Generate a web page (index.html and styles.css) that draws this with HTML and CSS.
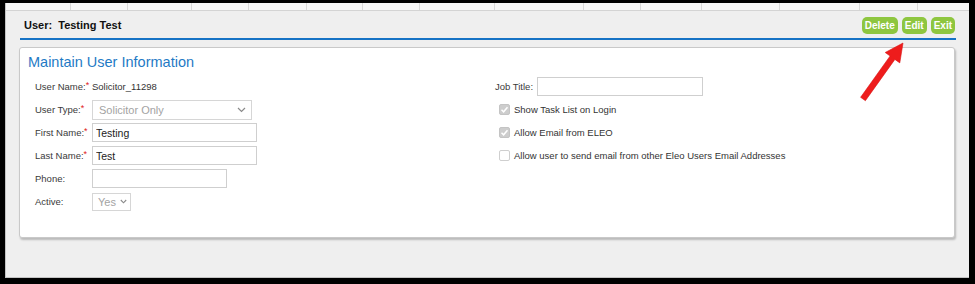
FILE: index.html
```html
<!DOCTYPE html>
<html lang="en">

<head>
   <meta charset="UTF-8">
   <meta name="viewport" content="width=device-width, initial-scale=1.0">
   <title>Maintain User Information</title>

   <link rel="stylesheet" href="styles.css">
</head>

<body>
   <div class="frame">
      <!-- bottom edge of the grid behind the popup -->
      <div class="grid-strip">
         <span class="col" style="width:64px"></span>
         <span class="col" style="width:56px"></span>
         <span class="col" style="width:63px"></span>
         <span class="col" style="width:56px"></span>
         <span class="col" style="width:57px"></span>
         <span class="col" style="width:55px"></span>
         <span class="col" style="width:56px"></span>
         <span class="col" style="width:74px"></span>
         <span class="col" style="width:88px"></span>
         <span class="col" style="width:56px"></span>
         <span class="col" style="width:60px"></span>
         <span class="col" style="width:77px"></span>
         <span class="col" style="width:79px"></span>
         <span class="col" style="width:57px"></span>
      </div>

      <div class="page-head">
         <p class="user-title">User:&nbsp; Testing Test</p>
         <div class="actions">
            <button class="action-btn">Delete</button>
            <button class="action-btn">Edit</button>
            <button class="action-btn">Exit</button>
         </div>
      </div>

      <div class="card">
         <p class="card-title">Maintain User Information</p>

         <div class="form">
            <div class="form-col left-col">
               <div class="row">
                  <span class="label">User Name:<span class="req">*</span></span>
                  <span class="value">Solicitor_11298</span>
               </div>
               <div class="row">
                  <span class="label">User Type:<span class="req">*</span></span>
                  <div class="select-box type-select">
                     <span>Solicitor Only</span>
                     <svg class="chevron" width="9" height="6" viewBox="0 0 9 6">
                        <path d="M1 1 L4.5 4.5 L8 1" fill="none" stroke="#8a8a8a" stroke-width="1.2"/>
                     </svg>
                  </div>
               </div>
               <div class="row">
                  <span class="label">First Name:<span class="req">*</span></span>
                  <input class="text-input name-input" type="text" value="Testing">
               </div>
               <div class="row">
                  <span class="label">Last Name:<span class="req">*</span></span>
                  <input class="text-input name-input" type="text" value="Test">
               </div>
               <div class="row">
                  <span class="label">Phone:</span>
                  <input class="text-input phone-input" type="text" value="">
               </div>
               <div class="row">
                  <span class="label">Active:</span>
                  <div class="select-box active-select">
                     <span>Yes</span>
                     <svg class="chevron" width="7" height="5" viewBox="0 0 7 5">
                        <path d="M0.8 1 L3.5 3.8 L6.2 1" fill="none" stroke="#8a8a8a" stroke-width="1.1"/>
                     </svg>
                  </div>
               </div>
            </div>

            <div class="form-col right-col">
               <div class="row">
                  <span class="label job-label">Job Title:</span>
                  <input class="text-input job-input" type="text" value="">
               </div>
               <div class="row check-row">
                  <span class="check checked">
                     <svg width="9" height="9" viewBox="0 0 9 9">
                        <path d="M1.5 4.8 L3.6 6.8 L7.5 2.2" fill="none" stroke="#fff" stroke-width="1.5"/>
                     </svg>
                  </span>
                  <span class="check-label">Show Task List on Login</span>
               </div>
               <div class="row check-row">
                  <span class="check checked">
                     <svg width="9" height="9" viewBox="0 0 9 9">
                        <path d="M1.5 4.8 L3.6 6.8 L7.5 2.2" fill="none" stroke="#fff" stroke-width="1.5"/>
                     </svg>
                  </span>
                  <span class="check-label">Allow Email from ELEO</span>
               </div>
               <div class="row check-row">
                  <span class="check"></span>
                  <span class="check-label">Allow user to send email from other Eleo Users Email Addresses</span>
               </div>
            </div>
         </div>
      </div>
   </div>

   <!-- red annotation arrow pointing at Edit -->
   <svg class="arrow" width="975" height="284" viewBox="0 0 975 284">
      <polygon points="903,43 899.8,62.9 894.9,59.4 865.4,100.7 860.6,97.3 890.1,56 885.2,52.5"
         fill="#ee1c1c" stroke="#d81414" stroke-width="0.6"/>
   </svg>
</body>
</html>
```

FILE: styles.css
```css
body{
   margin: 0;
   background-color: #000;
   font-family: "Liberation Sans", Arial, Helvetica, sans-serif;
   color: #333;
}

.frame{
   margin: 3px 0 0 5px;
   width: 963px;
   height: 274px;
   background-color: #efefef;
   border-left: 1px solid #c4c4c4;
   border-bottom: 1px solid #c4c4c4;
}

.grid-strip{
   display: flex;
   height: 7px;
   border-bottom: 1px solid #d4d4d4;
   background-color: #f6f6f6;
}

.col{
   height: 7px;
   border-right: 1px solid #d8d8d8;
}

.page-head{
   display: flex;
   justify-content: space-between;
   align-items: center;
   height: 27px;
   margin: 0 13px 0 14px;
   padding: 0 1px 0 4px;
   border-bottom: 2px solid #1673c5;
}

.user-title{
   margin: 0;
   font-size: 11px;
   font-weight: bold;
   color: #111;
}

.actions{
   display: flex;
   gap: 4px;
   margin-top: 1px;
}

.action-btn{
   height: 17px;
   padding: 0 3px;
   border: none;
   border-radius: 5px;
   background-color: #8ec63f;
   color: white;
   font-family: "Liberation Sans", Arial, sans-serif;
   font-size: 10px;
   font-weight: bold;
}

.card{
   margin: 7px 0 0 13px;
   width: 936px;
   height: 191px;
   padding: 5px 0 0 8px;
   box-sizing: border-box;
   background-color: white;
   border: 1px solid #c9c9c9;
   border-radius: 3px;
   box-shadow: 1px 2px 2px rgba(0, 0, 0, 0.22);
}

.card-title{
   margin: 0 0 4px 0;
   font-size: 14.5px;
   line-height: 18px;
   color: #1f7ac5;
}

.form{
   display: flex;
   margin-left: 7px;
}

.left-col{
   width: 460px;
}

.row{
   display: flex;
   align-items: center;
   height: 23px;
}

.label{
   width: 57px;
   font-size: 9.5px;
   color: #3a3a3a;
   flex-shrink: 0;
}

.req{
   color: #e02020;
   font-size: 9px;
   position: relative;
   top: -2px;
}

.value{
   font-size: 9.5px;
   color: #333;
}

.select-box{
   display: flex;
   justify-content: space-between;
   align-items: center;
   box-sizing: border-box;
   border: 1px solid #d6d6d6;
   font-size: 11px;
   color: #a3a3a3;
}

.type-select{
   width: 160px;
   height: 20px;
   padding: 0 5px 0 6px;
}

.active-select{
   width: 39px;
   height: 18px;
   padding: 0 3px 0 5px;
}

.text-input{
   box-sizing: border-box;
   height: 19px;
   margin: 0;
   padding: 0 3px;
   border: 1px solid #cfcfcf;
   font-family: "Liberation Sans", Arial, sans-serif;
   font-size: 10.5px;
   color: #222;
   background-color: white;
}

.name-input{
   width: 165px;
}

.phone-input{
   width: 135px;
}

.job-label{
   width: 42px;
}

.job-input{
   width: 166px;
}

.check-row{
   padding-left: 4px;
}

.check{
   display: flex;
   align-items: center;
   justify-content: center;
   width: 11px;
   height: 11px;
   box-sizing: border-box;
   border: 1px solid #cfcfcf;
   border-radius: 2px;
   background-color: white;
   margin-right: 4px;
}

.check.checked{
   background-color: #cdcdcd;
   border-color: #c4c4c4;
}

.check-label{
   font-size: 9.5px;
   color: #333;
}

.arrow{
   position: absolute;
   left: 0;
   top: 0;
   pointer-events: none;
}
```
